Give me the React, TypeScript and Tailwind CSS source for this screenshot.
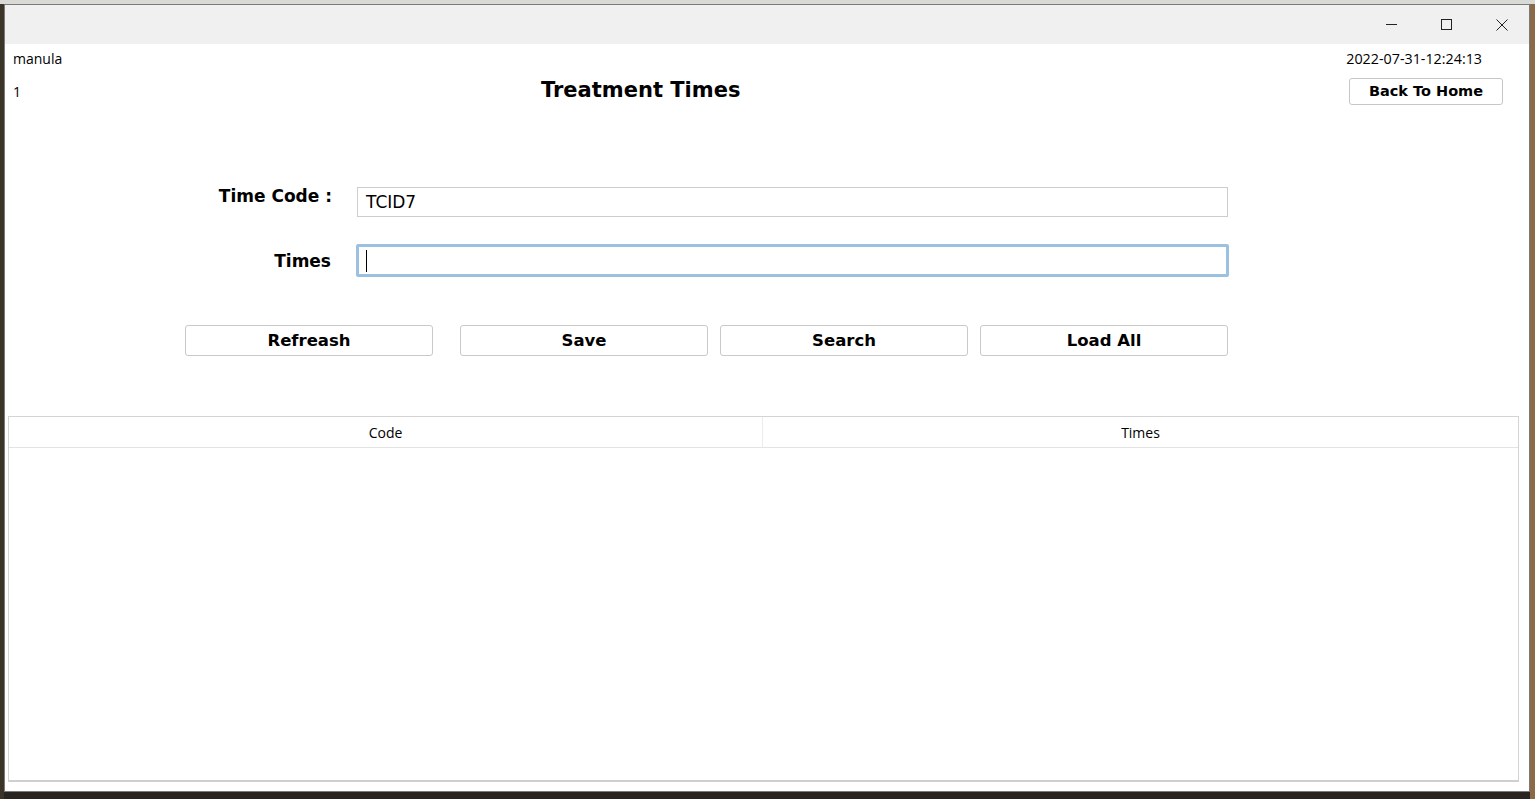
import React from 'react';

const bold = { fontFamily: '"DejaVu Sans", Verdana, sans-serif' };
const ui = { fontFamily: '"Open Sans", "Noto Sans", sans-serif' };

const ActionButton: React.FC<{ label: string; className?: string }> = ({ label, className = '' }) => (
  <button
    className={`h-[31px] w-[248px] rounded-[3px] border border-[#c9c9c9] bg-white pt-[1px] text-[16.5px] font-bold text-black ${className}`}
    style={bold}
  >
    {label}
  </button>
);

export default function App() {
  return (
    <div className="flex h-[799px] w-[1535px] flex-col overflow-hidden bg-[#2a2420]">
      {/* desktop strip behind the window */}
      <div className="h-[4px] w-full bg-[#d9d9d6]" />
      <div className="flex flex-1">
        <div className="w-[4px] bg-[#3b3428]" />
        <div className="flex h-[788px] w-[1526px] flex-col border border-[#7a7a7a] bg-white">
          {/* title bar */}
          <div className="flex h-[39px] items-center justify-end bg-[#f0f0f0]">
            <div className="flex h-full w-[55px] items-center justify-center">
              <svg width="11" height="11" viewBox="0 0 11 11">
                <path d="M0 5.5H11" stroke="#222" strokeWidth="1" />
              </svg>
            </div>
            <div className="flex h-full w-[55px] items-center justify-center">
              <svg width="11" height="11" viewBox="0 0 11 11">
                <rect x="0.5" y="0.5" width="10" height="10" fill="none" stroke="#222" strokeWidth="1" />
              </svg>
            </div>
            <div className="flex h-full w-[55px] items-center justify-center">
              <svg width="12" height="12" viewBox="0 0 12 12">
                <path d="M0.5 0.5L11.5 11.5M11.5 0.5L0.5 11.5" stroke="#222" strokeWidth="1" />
              </svg>
            </div>
          </div>

          {/* header */}
          <div className="flex pl-[8px] pr-[26px] pt-[6px]">
            <div className="flex w-[528px] flex-col text-[14px] text-black" style={ui}>
              <div className="h-[18px] leading-[18px]">manula</div>
              <div className="mt-[15px] h-[18px] leading-[18px]">1</div>
            </div>
            <div className="mt-[28px] text-[21px] font-bold leading-[24px] text-black" style={bold}>
              Treatment Times
            </div>
            <div className="flex-1" />
            <div className="flex flex-col items-end">
              <div className="mr-[21px] h-[18px] text-[14.3px] leading-[18px] text-black" style={ui}>
                2022-07-31-12:24:13
              </div>
              <button
                className="mt-[10px] h-[27px] w-[154px] rounded-[3px] border border-[#c6c6c6] bg-white text-[14.5px] font-bold text-black"
                style={bold}
              >
                Back To Home
              </button>
            </div>
          </div>

          {/* form */}
          <div className="mt-[82px] flex flex-col">
            <div className="flex items-start">
              <div className="-mt-[1px] w-[327px] text-right text-[17px] font-bold leading-[20px] text-black" style={bold}>
                Time Code :
              </div>
              <div
                className="ml-[25px] flex h-[30px] w-[871px] items-center border border-[#cdcdcd] pl-[8px] pt-[1px] text-[17px] text-black"
                style={bold}
              >
                TCID7
              </div>
            </div>
            <div className="mt-[27px] flex items-start">
              <div className="mt-[7px] w-[326px] text-right text-[17px] font-bold leading-[20px] text-black" style={bold}>
                Times
              </div>
              <div className="ml-[25px] flex h-[33px] w-[873px] items-center rounded-[2px] border-[3px] border-[#9cc0e0] pl-[7px]">
                <div className="h-[22px] w-[1px] bg-black" />
              </div>
            </div>
          </div>

          {/* actions */}
          <div className="mt-[48px] flex pl-[180px]">
            <ActionButton label="Refreash" />
            <ActionButton label="Save" className="ml-[27px]" />
            <ActionButton label="Search" className="ml-[12px]" />
            <ActionButton label="Load All" className="ml-[12px]" />
          </div>

          {/* table */}
          <div className="ml-[3px] mt-[60px] flex h-[366px] w-[1511px] flex-col border border-[#d4d4d4] border-b-2 border-b-[#cfcfcf]">
            <div className="flex h-[31px] border-b border-[#e3e3e3] text-[14px] text-black" style={ui}>
              <div className="flex w-[754px] items-center justify-center border-r border-[#ececec]">Code</div>
              <div className="flex flex-1 items-center justify-center">Times</div>
            </div>
            <div className="flex-1" />
          </div>
        </div>
        <div className="flex-1 bg-[#8a6a48]" />
      </div>
    </div>
  );
}
